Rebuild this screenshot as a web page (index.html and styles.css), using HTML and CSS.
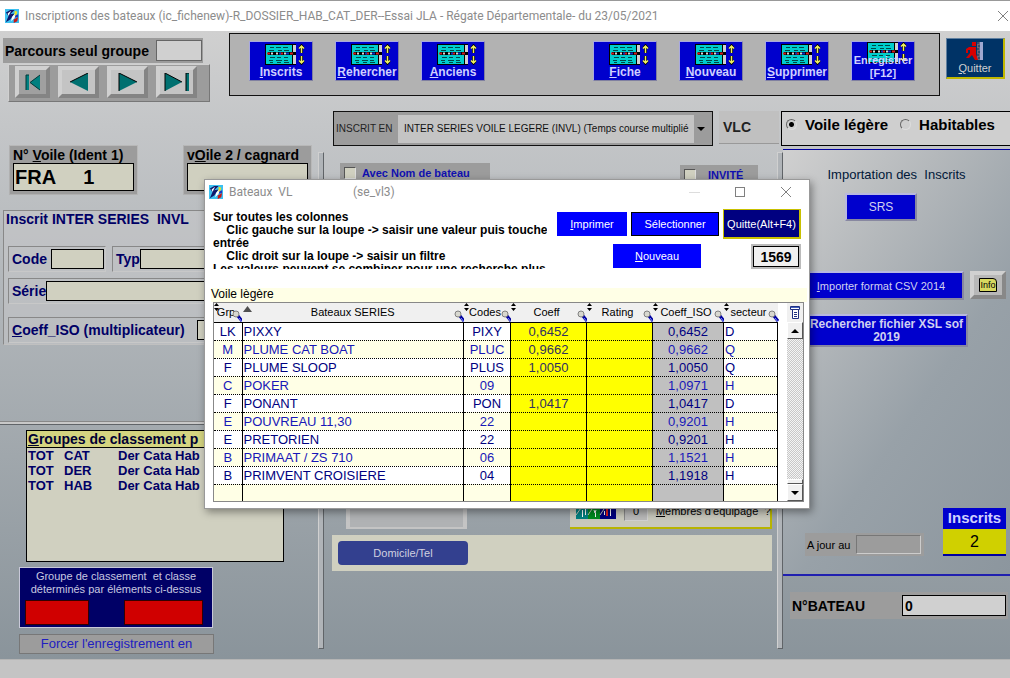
FILE: index.html
```html
<!DOCTYPE html>
<html lang="fr">
<head>
  <meta charset="UTF-8">
  <meta name="viewport" content="width=device-width, initial-scale=1.0">
  <title>Inscriptions des bateaux</title>
  <link rel="stylesheet" href="styles.css">
</head>
<body>
  <!-- icônes partagées -->
  <svg class="defs" width="0" height="0" aria-hidden="true">
    <symbol id="logo" viewBox="0 0 16 16">
      <rect width="16" height="16" fill="#3cc0f0"/>
      <path d="M1 4l5-3h5L6 6l5-1L6 12l-5 3 3-7z" fill="#10186c"/>
      <path d="M3 5l4-3-3 6zM8 9l5-6-1 6-5 5z" fill="#fff"/>
      <path d="M11 2l3 1-1 4-2 1z" fill="#f0e020"/>
      <path d="M12 7l3-1v3l-4 1z" fill="#2038c0"/>
      <path d="M10 12l5-3-1 5-4 2z" fill="#c81818"/>
    </symbol>
    <symbol id="sheet" viewBox="0 0 40 21">
      <rect x="0" y="0" width="31" height="21" fill="#000"/>
      <rect x="1" y="1" width="26" height="19" fill="#00cdcd"/>
      <rect x="28" y="1" width="3" height="19" fill="#d0d0d0"/>
      <path d="M5 3.500h4m2 0h5m2 0h5M4 6.500h5m4 0h4m2 0h5M5 13.500h5m2 0h4m3 0h4M4 16.500h4m3 0h6m2 0h4M5 18.500h3m4 0h4m3 0h5" stroke="#004848"/>
      <path d="M3 9.500h28" stroke="#000" stroke-width="3"/>
      <path d="M2 9.500h3m10 0h3m7 0h3" stroke="#d02020" stroke-width="2"/>
      <path d="M6 9.500h2m3 0h2m6 0h2" stroke="#d8d8d8" stroke-width="2"/>
      <path d="M14 9.500h2m5 0h3" stroke="#1030c0" stroke-width="2"/>
      <path d="M36.500 1v8M34.500 4.500l2-2.500 2 2.500M36.500 12v8M34.500 16.500l2 2.500 2-2.500" fill="none" stroke="#000" stroke-width="3"/>
      <path d="M36.500 2v7M34 4.500l2.500-2.500 2.500 2.500M36.500 12v7M34 16.500l2.500 2.500 2.500-2.500" fill="none" stroke="#f0f060" stroke-width="1.500"/>
    </symbol>
    <symbol id="lens" viewBox="0 0 11 12">
      <path d="M6 6l4 5" stroke="#0000a0" stroke-width="3"/>
      <path d="M7 8l3 4" stroke="#8090ff"/>
      <circle cx="4" cy="4" r="3" fill="#d8d8d0" stroke="#808080"/>
    </symbol>
    <symbol id="sort" viewBox="0 0 5 8">
      <path d="M0 3l2.500-3L5 3zM0 5h5L2.500 8z" fill="#000"/>
    </symbol>
  </svg>

  <header class="titlebar">
    <svg class="logo"><use href="#logo"/></svg>
    <h1>Inscriptions des bateaux (ic_fichenew)-R_DOSSIER_HAB_CAT_DER--Essai JLA - Régate Départementale- du 23/05/2021</h1>
    <button class="close" aria-label="Fermer"><svg width="10" height="10"><path d="M0 0l10 10M10 0L0 10" stroke="#808080"/></svg></button>
  </header>

  <main class="desk">
    <div class="head">
      <div class="browse">
        <div class="browse-label">
          <label for="parcours">Parcours seul groupe</label>
          <input id="parcours" type="text">
        </div>
        <div class="browse-nav">
          <button class="first" aria-label="Premier"><svg width="18" height="17"><path d="M2 1h3v15H2zM16 1v15L6 8.500z" fill="#008080"/><path d="M2 16V1h3M16 16L6 8.500 16 1" fill="none" stroke="#003838"/></svg></button>
          <button aria-label="Précédent"><svg width="20" height="18"><path d="M19 0v18L1 9z" fill="#007070"/><path d="M1 9L19 0" stroke="#000"/></svg></button>
          <button aria-label="Suivant"><svg width="20" height="18"><path d="M1 0v18l18-9z" fill="#007070"/><path d="M1 18V0l18 9" fill="none" stroke="#000"/></svg></button>
          <button aria-label="Dernier"><svg width="26" height="18"><path d="M1 0v18l17-9zM22 0h3v18h-3z" fill="#007070"/><path d="M1 18V0l17 9M22 18V0h3" fill="none" stroke="#000"/></svg></button>
        </div>
      </div>
      <nav class="toolbar">
        <button><svg class="sheet"><use href="#sheet"/></svg><span><u>I</u>nscrits</span></button>
        <button><svg class="sheet"><use href="#sheet"/></svg><span><u>R</u>ehercher</span></button>
        <button><svg class="sheet"><use href="#sheet"/></svg><span><u>A</u>nciens</span></button>
        <span class="slot"></span>
        <button><svg class="sheet"><use href="#sheet"/></svg><span><u>F</u>iche</span></button>
        <button><svg class="sheet"><use href="#sheet"/></svg><span><u>N</u>ouveau</span></button>
        <button><svg class="sheet"><use href="#sheet"/></svg><span><u>S</u>upprimer</span></button>
        <button class="save"><svg class="sheet"><use href="#sheet"/></svg><span>Enregistrer<br>[F12]</span></button>
      </nav>
      <button class="quit">
        <svg width="18" height="18">
          <path d="M11 0h3v18h-3z" fill="#686878"/><path d="M14 0h3v18h-3z" fill="#a0a8d0"/>
          <path d="M11 1h2m-1 3h2m-3 3h2m-1 3h2m-3 3h2m-1 3h2" stroke="#003060"/>
          <path d="M6 0h4v4H6zM3 5h7v7l2 6h-3l-3-5-3 3H0l4-5V8H2v3H0V7z" fill="#d80000"/>
        </svg>
        <span><u>Q</u>uitter</span>
      </button>
    </div>

    <div class="columns">
      <section class="left">
        <div class="idents">
          <div class="ident">
            <label for="voile1">N° <u>V</u>oile (Ident 1)</label>
            <input id="voile1" type="text" value="FRA     1">
          </div>
          <div class="ident">
            <label for="voile2">v<u>O</u>ile 2 / cagnard</label>
            <input id="voile2" type="text">
          </div>
        </div>

        <div class="serie">
          <h2>Inscrit INTER SERIES&nbsp; INVL</h2>
          <div class="serie-row">
            <div class="cell"><label for="code">Code</label><input id="code" class="w-code" type="text"></div>
            <div class="cell grow"><label for="typ">Typ</label><input id="typ" type="text"></div>
          </div>
          <div class="cell"><label for="serie">Série</label><input id="serie" type="text"></div>
          <div class="cell coeff"><label for="iso"><u>C</u>oeff_ISO (multiplicateur)</label><input id="iso" type="text"></div>
        </div>

        <div class="groupes">
          <div class="liste">
            <h3><u>G</u>roupes de classement p</h3>
            <table>
              <tr><td>TOT</td><td>CAT</td><td>Der Cata Hab</td></tr>
              <tr><td>TOT</td><td>DER</td><td>Der Cata Hab</td></tr>
              <tr><td>TOT</td><td>HAB</td><td>Der Cata Hab</td></tr>
            </table>
          </div>
          <div class="classe">
            <p>Groupe de classement&nbsp; et classe<br>déterminés par éléments ci-dessus</p>
            <div class="rouges"><span></span><span></span></div>
          </div>
          <button class="forcer">Forcer l'enregistrement en</button>
        </div>
      </section>

      <section class="middle">
        <div class="inscrit">
          <div class="inscrit-box">
            <label for="inscrit">INSCRIT EN</label>
            <select id="inscrit"><option>INTER SERIES VOILE LEGERE (INVL) (Temps course multiplié</option></select>
          </div>
          <div class="vlc">VLC</div>
        </div>
        <div class="options">
          <label class="tick"><input type="checkbox">Avec Nom de bateau</label>
          <label class="tick invite"><input type="checkbox">INVITÉ</label>
        </div>
        <div class="bottom">
          <div class="cadre"></div>
          <div class="equipage">
            <svg width="40" height="16">
              <path d="M0 16V6l5-5h5l4 5v10z" fill="#008080"/><path d="M12 16V6l4-5h6l4 5v10z" fill="#008a20"/><path d="M24 16V6l5-5h5l6 5v10z" fill="#000080"/>
              <path d="M5 0h5v3H5zM17 0h5v4h-5zM30 0h5v3h-5z" fill="#d8d060"/>
              <path d="M0 12l5-7M12 12l4-6M24 12l4-6" stroke="#c8c8bc"/>
              <path d="M6.500 7v7M9.500 5v7M18 7l1 3 1-3M19.500 10v4" fill="none" stroke="#fff"/><path d="M31 6v7" stroke="#e02020" stroke-width="2"/><path d="M28.500 8v4M34.500 5v8" stroke="#fff"/>
            </svg>
            <input type="text" value="0" aria-label="Nombre d'équipiers">
            <button><u>M</u>embres d'équipage&nbsp; ?</button>
          </div>
        </div>
        <div class="domicile"><button>Domicile/Tel</button></div>
      </section>

      <section class="right">
        <div class="type">
          <label><input type="radio" name="type" checked>Voile légère</label>
          <label><input type="radio" name="type">Habitables</label>
        </div>
        <div class="import">
          <h2>Importation des&nbsp; Inscrits</h2>
          <button class="blue srs">SRS</button>
          <div class="csv">
            <button class="blue"><u>I</u>mporter format CSV 2014</button>
            <button class="info"><span>Info</span></button>
          </div>
          <button class="blue xsl">Rechercher fichier XSL sof 2019</button>
          <div class="totals">
            <div class="ajour"><label for="ajour">A jour au</label><input id="ajour" type="text"></div>
            <div class="count"><b>Inscrits</b><span>2</span></div>
          </div>
        </div>
        <div class="bateau"><label for="bateau">N°BATEAU</label><input id="bateau" type="text" value="0"></div>
      </section>
    </div>

    <!-- fenêtre de recherche -->
    <div class="dialog" role="dialog" aria-labelledby="dlg-title">
      <div class="dialog-bar">
        <svg class="logo"><use href="#logo"/></svg>
        <h2 id="dlg-title"><span>Bateaux&nbsp; VL</span><span>(se_vl3)</span></h2>
        <button aria-label="Réduire"><svg width="11" height="11"><path d="M0 5.500h11" stroke="#ddd"/></svg></button>
        <button aria-label="Agrandir"><svg width="11" height="11"><rect x=".5" y=".5" width="9" height="9" fill="none" stroke="#808080"/></svg></button>
        <button aria-label="Fermer"><svg width="11" height="11"><path d="M0 0l10 10M10 0L0 10" stroke="#808080"/></svg></button>
      </div>
      <div class="dialog-top">
        <p class="aide">Sur toutes les colonnes<br>&nbsp;&nbsp;&nbsp; Clic gauche sur la loupe -&gt; saisir une valeur puis touche<br>entrée<br>&nbsp;&nbsp;&nbsp; Clic droit sur la loupe -&gt; saisir un filtre<br>Les valeurs peuvent se combiner pour une recherche plus</p>
        <div class="actions">
          <div class="actions-row">
            <button class="print"><u>I</u>mprimer</button>
            <button class="select">Sélectionner</button>
            <button class="leave">Quitte(Alt+F4)</button>
          </div>
          <div class="actions-row">
            <button class="new"><u>N</u>ouveau</button>
            <output>1569</output>
          </div>
        </div>
      </div>
      <h3 class="caption">Voile lègère</h3>
      <div class="grid">
        <table class="boats">
          <colgroup><col class="c-grp"><col><col class="c-code"><col class="c-coeff"><col class="c-rating"><col class="c-iso"><col class="c-sect"></colgroup>
          <thead>
            <tr>
              <th><svg class="sort"><use href="#sort"/></svg>Grp<svg class="lens"><use href="#lens"/></svg></th>
              <th><svg class="up" viewBox="0 0 9 6"><path d="M0 6l4.500-6L9 6z" fill="#505050"/></svg>Bateaux SERIES<svg class="lens"><use href="#lens"/></svg></th>
              <th><svg class="sort"><use href="#sort"/></svg>Codes<svg class="lens"><use href="#lens"/></svg></th>
              <th><svg class="sort"><use href="#sort"/></svg>Coeff<svg class="lens"><use href="#lens"/></svg></th>
              <th><svg class="sort"><use href="#sort"/></svg>Rating<svg class="lens"><use href="#lens"/></svg></th>
              <th><svg class="sort"><use href="#sort"/></svg>Coeff_ISO<svg class="lens"><use href="#lens"/></svg></th>
              <th><svg class="sort"><use href="#sort"/></svg>secteur<svg class="lens"><use href="#lens"/></svg></th>
            </tr>
          </thead>
          <tbody>
            <tr><td>LK</td><td>PIXXY</td><td>PIXY</td><td>0,6452</td><td></td><td>0,6452</td><td>D</td></tr>
            <tr><td>M</td><td>PLUME CAT BOAT</td><td>PLUC</td><td>0,9662</td><td></td><td>0,9662</td><td>Q</td></tr>
            <tr><td>F</td><td>PLUME SLOOP</td><td>PLUS</td><td>1,0050</td><td></td><td>1,0050</td><td>Q</td></tr>
            <tr><td>C</td><td>POKER</td><td>09</td><td></td><td></td><td>1,0971</td><td>H</td></tr>
            <tr><td>F</td><td>PONANT</td><td>PON</td><td>1,0417</td><td></td><td>1,0417</td><td>D</td></tr>
            <tr><td>E</td><td>POUVREAU 11,30</td><td>22</td><td></td><td></td><td>0,9201</td><td>H</td></tr>
            <tr><td>E</td><td>PRETORIEN</td><td>22</td><td></td><td></td><td>0,9201</td><td>H</td></tr>
            <tr><td>B</td><td>PRIMAAT / ZS 710</td><td>06</td><td></td><td></td><td>1,1521</td><td>H</td></tr>
            <tr><td>B</td><td>PRIMVENT CROISIERE</td><td>04</td><td></td><td></td><td>1,1918</td><td>H</td></tr>
            <tr><td></td><td></td><td></td><td></td><td></td><td></td><td></td></tr>
          </tbody>
        </table>
        <div class="scroll">
          <button class="menu" aria-label="Menu"><svg width="10" height="13"><path d="M.5.500h9v3h-9zM2.500 3.500h6v9h-6z" fill="#fff" stroke="#203080"/><path d="M1 1.500h8" stroke="#4060c0"/><path d="M4 6.500h3M4 8.500h3M4 10.500h3" stroke="#203080"/></svg></button>
          <button aria-label="Haut"><svg width="8" height="4"><path d="M4 0l4 4H0z"/></svg></button>
          <div class="track"><span></span></div>
          <button aria-label="Bas"><svg width="8" height="4"><path d="M0 0h8L4 4z"/></svg></button>
        </div>
      </div>
    </div>
  </main>
  <footer class="status"></footer>
</body>
</html>
```
FILE: styles.css
```css
* {
  margin: 0;
  padding: 0;
  box-sizing: border-box;
}
body {
  display: flex;
  flex-direction: column;
  min-height: 100vh;
  font-family: "Liberation Sans", Arial, sans-serif;
  font-size: 13px;
  background: #c4c4c4;
}
h1, h2, h3 {
  font-size: inherit;
  font-weight: inherit;
}
button, input, select {
  font: inherit;
  color: inherit;
  border: 0;
  border-radius: 0;
  background: none;
  min-width: 0;
}
svg {
  display: block;
}
.defs {
  position: absolute;
}
.logo {
  width: 14px;
  height: 14px;
}
/* barre de titre */
.titlebar {
  display: flex;
  align-items: center;
  gap: 6px;
  height: 31px;
  padding: 0 2px 0 5px;
  border-top: 1px solid #999;
  background: #fff;
  color: #8c8c8c;
  font-family: Roboto, sans-serif;
  font-size: 12px;
  white-space: nowrap;
}
.close {
  margin-left: auto;
}
/* fond */
.desk {
  position: relative;
  flex: 1;
  display: flex;
  flex-direction: column;
  background: linear-gradient(#d0d0d0, #c4c6c8 15%, #8a949b);
}
.status {
  height: 19px;
  border-top: 1px solid #b4b4b4;
  background: #c4c4c4;
}
/* entête */
.head {
  display: flex;
  align-items: flex-start;
  height: 72px;
  padding: 2px 5px 0 3px;
}
.browse {
  width: 226px;
  padding-top: 5px;
}
.browse-label {
  display: flex;
  align-items: center;
  width: 200px;
  height: 25px;
  background: #9c9c9c;
  font-size: 14px;
  font-weight: bold;
}
.browse-label label {
  width: 153px;
  padding-left: 2px;
  white-space: nowrap;
}
.browse-label input {
  width: 46px;
  height: 21px;
  border: 1px solid #666;
  background: #d0d0d0;
}
.browse-nav {
  display: flex;
  gap: 8px;
  width: 202px;
  height: 38px;
  margin: 1px 0 0 5px;
  padding: 1px 6px;
  border: 1px solid;
  border-color: #d0d0d0 #777 #777 #d0d0d0;
  background: #9c9c9c;
}
.browse-nav button {
  display: flex;
  align-items: center;
  justify-content: center;
  width: 41px;
  height: 32px;
  border: 4px solid;
  border-color: #d0d0d0 #848484 #848484 #d0d0d0;
  background: #c4c4c4;
}
.browse-nav .first {
  width: 35px;
  background: #a0a0a0;
}
.toolbar {
  flex: 1;
  display: flex;
  gap: 22px;
  height: 63px;
  padding: 7px 19px;
  border: 1px solid #111;
  background: #b2b2b2;
}
.toolbar button, .slot {
  width: 64px;
  height: 40px;
}
.toolbar button {
  display: flex;
  flex-direction: column;
  align-items: center;
  padding-top: 2px;
  border: 1px solid;
  border-color: #a8a8e0 #8080a0 #8080a0 #a8a8e0;
  background: #0000cd;
  color: #d0d0ff;
  font-size: 12px;
  font-weight: bold;
  line-height: 15px;
  overflow: hidden;
}
.sheet {
  flex: none;
  width: 40px;
  height: 21px;
  margin-left: 8px;
}
.toolbar span {
  white-space: nowrap;
}
.toolbar .save {
  justify-content: flex-end;
  font-size: 11px;
  line-height: 13px;
}
.save .sheet {
  margin-bottom: -9px;
}
.quit {
  display: flex;
  flex-direction: column;
  align-items: center;
  width: 59px;
  height: 41px;
  margin: 5px 0 0 6px;
  padding-top: 3px;
  border: 1px solid;
  border-width: 1px 2px 2px 1px;
  border-color: #6080a0 #c0b800 #c0b800 #6080a0;
  background: #003366;
  color: #d0d0d0;
  font-size: 11px;
  line-height: 16px;
}
/* trois colonnes */
.columns {
  flex: 1;
  display: grid;
  grid-template-columns: 324px minmax(0, 1fr) 227px;
}
.left {
  position: relative;
  padding-top: 42px;
}
.left::after, .middle::after {
  content: "";
  position: absolute;
  top: 49px;
  right: 0;
  bottom: 10px;
  width: 4px;
  border: 1px solid;
  border-color: #d0d0d0 #606468 #606468 #d0d0d0;
  background: #b0b4b8;
}
.idents {
  display: flex;
  gap: 45px;
  padding-left: 9px;
}
.ident {
  width: 129px;
  height: 50px;
  padding: 2px 3px 3px;
  border: 1px solid;
  border-color: #b8b8b8 #b8b8b8 #b0b0b0 #b0b0b0;
  background: #9c9c9c;
  font-size: 14px;
  font-weight: bold;
  white-space: nowrap;
}
.ident label {
  display: block;
  height: 15px;
  line-height: 15px;
}
.ident input {
  width: 100%;
  height: 28px;
  padding-left: 1px;
  border: 1px solid #000;
  background: #d0d0c0;
  font-size: 20px;
  white-space: pre;
}
.serie {
  display: flex;
  flex-direction: column;
  height: 135px;
  margin: 15px 8px 0 3px;
  padding: 0 2px 0 4px;
  border: 1px solid;
  border-color: #888 #c8c8c8 #c0c0c0 #888;
  background: rgba(200, 200, 202, .5);
  color: #000066;
  font-size: 14px;
  font-weight: bold;
}
.serie h2 {
  height: 35px;
  margin-left: -2px;
}
.serie-row {
  display: flex;
  gap: 6px;
  margin-bottom: 6px;
}
.cell {
  display: flex;
  align-items: center;
  height: 26px;
  padding: 0 1px 0 3px;
  border: 1px solid;
  border-color: #888 #c8c8c8 #c8c8c8 #888;
}
.cell label {
  flex: none;
}
.cell input {
  flex: 1;
  height: 20px;
  border: 1px solid #000;
  background: #d0d0c0;
}
.cell.grow {
  flex: 1;
}
.cell .w-code {
  flex: none;
  width: 53px;
  margin-left: 4px;
}
.coeff {
  margin-top: 13px;
}
.coeff input {
  margin-left: 12px;
}
.groupes {
  margin: 77px 4px 0 0;
  border-top: 2px solid #c8c8c8;
  box-shadow: 0 -1px #888, inset 0 1px #606468;
  padding: 6px 0 0 19px;
}
.liste {
  width: 258px;
  height: 132px;
  margin-left: 7px;
  border: 1px solid #000;
  background: #d0d0c0;
  color: #000066;
  font-size: 13px;
  font-weight: bold;
}
.liste h3 {
  height: 17px;
  padding-left: 1px;
  border-bottom: 1px solid #000;
  background: #d4d480;
  color: #000033;
  font-size: 14px;
  line-height: 16px;
  white-space: nowrap;
}
.liste table {
  border-spacing: 0;
}
.liste td {
  padding-left: 1px;
  line-height: 15px;
}
.liste td:nth-child(1) {
  width: 36px;
}
.liste td:nth-child(2) {
  width: 54px;
}
.classe {
  width: 194px;
  height: 61px;
  margin-top: 5px;
  padding: 2px 5px;
  border: 1px solid #c8c8d8;
  background: #000066;
  color: #c8c8e0;
  font-size: 11px;
  line-height: 13px;
  text-align: center;
  white-space: nowrap;
}
.rouges {
  display: flex;
  justify-content: space-between;
  margin: 4px 4px 0 0;
}
.rouges span {
  width: 64px;
  height: 25px;
  border: 1px solid #300;
  background: #d00000;
}
.rouges span + span {
  width: 79px;
}
.forcer {
  display: block;
  width: 195px;
  height: 20px;
  margin-top: 6px;
  border: 1px solid #777;
  background: #9c9c9c;
  color: #2020c0;
  line-height: 16px;
}
/* colonne centrale */
.middle {
  position: relative;
  display: flex;
  flex-direction: column;
  padding-top: 8px;
}
.inscrit {
  display: flex;
  justify-content: space-between;
  gap: 6px;
  padding: 0 4px 0 9px;
}
.inscrit-box {
  flex: 1;
  display: flex;
  align-items: center;
  min-width: 0;
  height: 35px;
  padding-left: 2px;
  border: 1px solid #111;
  background: #9c9c9c;
  font-size: 10px;
}
.inscrit-box label {
  flex: none;
  width: 62px;
  color: #222;
  white-space: nowrap;
}
.inscrit-box select {
  flex: 1;
  height: 28px;
  padding: 0 14px 0 6px;
  appearance: none;
  background: url("data:image/svg+xml,%3Csvg xmlns='http://www.w3.org/2000/svg' width='8' height='4'%3E%3Cpath d='M0 0h8L4 4z'/%3E%3C/svg%3E") no-repeat right 7px center, linear-gradient(90deg, #c4c4c4 calc(100% - 18px), #9c9c9c calc(100% - 18px));
  color: #111;
}
.vlc {
  width: 60px;
  height: 33px;
  padding-left: 4px;
  border-bottom: 1px solid #999;
  background: #c0c0c0;
  color: #222;
  font-size: 14px;
  font-weight: bold;
  line-height: 33px;
}
.options {
  display: flex;
  justify-content: space-between;
  padding: 17px 25px 0 16px;
}
.tick {
  display: flex;
  align-items: center;
  gap: 6px;
  width: 150px;
  height: 19px;
  padding-left: 4px;
  background: #9c9c9c;
  color: #1010b0;
  font-size: 11px;
  font-weight: bold;
}
.tick input {
  appearance: none;
  width: 12px;
  height: 12px;
  border: 1px solid;
  border-color: #555 #ddd #ddd #555;
  background: #d0d0c0;
}
.tick.invite {
  width: 78px;
  gap: 12px;
  margin-top: 2px;
}
.bottom {
  display: flex;
  justify-content: space-between;
  align-items: flex-end;
  margin: auto 11px 6px 22px;
}
.cadre {
  width: 121px;
  height: 40px;
  border: 1px solid #c4c4c4;
  border-width: 0 4px 2px;
  background: #b0b2b4;
}
.equipage {
  display: flex;
  align-items: center;
  gap: 8px;
  width: 202px;
  height: 34px;
  padding-left: 6px;
  border: 2px solid #b8b400;
  border-width: 0 2px 2px 0;
  background: #c8c8bc;
  font-size: 11px;
  white-space: nowrap;
}
.equipage svg {
  flex: none;
}
.equipage input {
  width: 24px;
  height: 20px;
  border: 1px solid;
  border-color: #888 #d0d0d0 #d0d0d0 #888;
  background: #b8b8b8;
  text-align: center;
}
.domicile {
  height: 36px;
  margin: 0 11px 88px 8px;
  padding: 6px;
  background: #d0d0c0;
}
.domicile button {
  width: 130px;
  height: 24px;
  border-radius: 4px;
  background: #33408f;
  color: #d0d0e0;
  font-size: 11px;
}
/* colonne de droite */
.right {
  display: flex;
  flex-direction: column;
  padding-top: 8px;
}
.type {
  position: relative;
  display: flex;
  gap: 12px;
  height: 35px;
  margin-left: -2px;
  padding: 4px 4px;
  border: 1px solid #000;
  border-right: 0;
  background: #cfcfcf;
  font-size: 15px;
  font-weight: bold;
  white-space: nowrap;
}
.type label {
  display: flex;
  gap: 8px;
  height: 17px;
  align-items: center;
}
.type input {
  appearance: none;
  width: 11px;
  height: 11px;
  border: 1px solid;
  border-color: #666 #ddd #ddd #666;
  border-radius: 50%;
}
.type input:checked {
  background: radial-gradient(#000 2px, transparent 3px);
}
.import {
  flex: 1;
  display: flex;
  flex-direction: column;
  margin-top: 3px;
  padding-top: 17px;
  border-top: 1px solid #0000a0;
  border-bottom: 2px solid #2020b0;
  background: linear-gradient(125deg, #d0d0d0, #b4b8bb 30%, #98a1a8 60%, #8c969e);
}
.import h2 {
  align-self: center;
  height: 26px;
  color: #001838;
  white-space: nowrap;
}
.blue {
  border: 2px solid;
  border-color: #b8b8e0 #8888a0 #8888a0 #b8b8e0;
  background: #0000cd;
  color: #d0d0f0;
  font-size: 12px;
  white-space: nowrap;
}
.srs {
  width: 72px;
  height: 28px;
  margin-left: 62px;
}
.csv {
  display: flex;
  gap: 6px;
  margin: 50px 0 14px 0;
}
.csv .blue {
  width: 181px;
  height: 29px;
  padding-left: 15px;
  font-size: 11px;
}
.info {
  display: flex;
  align-items: center;
  justify-content: center;
  width: 36px;
  height: 28px;
  border: 4px solid;
  border-color: #d0d0d0 #888 #888 #d0d0d0;
  background: #b8b8b8;
}
.info span {
  border: 1px solid #000;
  border-top-right-radius: 4px;
  background: #d8d860;
  font-size: 9px;
  line-height: 12px;
}
.xsl {
  width: 185px;
  height: 33px;
  padding-left: 22px;
  font-weight: bold;
  line-height: 13px;
  white-space: normal;
}
.totals {
  display: flex;
  justify-content: space-between;
  align-items: flex-end;
  margin: auto 4px 18px 22px;
}
.ajour {
  display: flex;
  align-items: center;
  gap: 6px;
  width: 119px;
  height: 23px;
  padding-left: 2px;
  background: #9c9c9c;
  font-size: 11px;
  white-space: nowrap;
}
.ajour input {
  width: 65px;
  height: 19px;
  border: 1px solid;
  border-color: #777 #ccc #ccc #777;
}
.count {
  width: 63px;
  border-bottom: 2px solid #0000a0;
  background: #d0d000;
  text-align: center;
}
.count b {
  display: block;
  height: 21px;
  background: #0000cd;
  color: #d0d0ff;
  font-size: 15px;
  line-height: 20px;
}
.count span {
  display: block;
  height: 25px;
  font-size: 16px;
  line-height: 25px;
}
.bateau {
  display: flex;
  align-items: center;
  justify-content: space-between;
  height: 27px;
  margin: 16px 2px 40px 7px;
  padding: 0 2px;
  background: #9c9c9c;
  font-size: 14px;
  font-weight: bold;
}
.bateau input {
  width: 104px;
  height: 21px;
  padding-left: 2px;
  border: 1px solid #000;
  background: #d0d0d0;
}
/* fenêtre */
.dialog {
  position: absolute;
  top: 148px;
  left: 204px;
  width: 606px;
  border: 1px solid #999;
  background: #fff;
  box-shadow: 2px 3px 8px rgba(0, 0, 0, .4);
}
.dialog-bar {
  display: flex;
  align-items: center;
  height: 24px;
  padding: 0 17px 0 4px;
  color: #8c8c8c;
  font-family: Roboto, sans-serif;
  font-size: 12px;
}
.dialog-bar h2 {
  display: flex;
  flex: 1;
  padding-left: 6px;
}
.dialog-bar h2 span:first-child {
  width: 124px;
}
.dialog-bar button {
  margin-left: 35px;
}
.dialog-top {
  display: flex;
  justify-content: space-between;
  height: 84px;
  padding: 5px 8px 0 8px;
}
.aide {
  height: 60px;
  padding-top: 2px;
  overflow: hidden;
  font-size: 12px;
  font-weight: bold;
  line-height: 13px;
  white-space: nowrap;
}
.actions-row {
  display: flex;
  gap: 4px;
  align-items: center;
  margin-bottom: 5px;
  font-size: 11px;
}
.actions button {
  height: 24px;
  background: #0000ff;
  color: #fff;
}
.actions .print {
  width: 70px;
}
.actions .select {
  width: 88px;
  border: 1px solid #000;
}
.actions .leave {
  width: 78px;
  height: 30px;
  border: 2px solid #c8c000;
  border-width: 1px 2px 2px 1px;
  background: #000080;
}
.actions .new {
  width: 88px;
  margin-left: 56px;
}
.actions output {
  width: 46px;
  height: 21px;
  margin: 0 2px 0 auto;
  border: 1px solid #000;
  outline: 2px solid #bbb;
  background: #f0f0f0;
  font-size: 14px;
  font-weight: bold;
  line-height: 20px;
  text-align: center;
}
.caption {
  height: 14px;
  margin: 0 2px 0 6px;
  background: #ffffe6;
  font-size: 12px;
  line-height: 13px;
}
.grid {
  display: flex;
  justify-content: space-between;
  margin: 0 5px 6px 8px;
  border: 1px solid #888;
}
.boats {
  table-layout: fixed;
  width: 564px;
  border-collapse: collapse;
  font-size: 13px;
}
.c-grp { width: 28px; }
.c-code { width: 47px; }
.c-coeff { width: 76px; }
.c-rating { width: 66px; }
.c-iso { width: 71px; }
.c-sect { width: 54px; }
.boats th {
  position: relative;
  height: 19px;
  border-bottom: 1px solid #000;
  background: #f0f0f0;
  font-size: 11px;
  font-weight: normal;
}
.boats th:not(:nth-child(2)) {
  padding-right: 4px;
}
.sort, .lens, .up {
  position: absolute;
}
.sort {
  top: 0;
  left: 0;
  width: 5px;
  height: 8px;
}
.up {
  top: 3px;
  left: 1px;
  width: 9px;
  height: 6px;
}
.lens {
  right: -1px;
  bottom: 0;
  width: 11px;
  height: 12px;
}
.boats td {
  height: 18px;
  border-right: 1px solid #000;
  border-bottom: 1px dotted #000;
  color: #000080;
  line-height: 17px;
  text-align: center;
}
.boats tr:nth-child(even) td {
  background: #ffffe6;
  color: #1818b8;
}
.boats td:nth-child(2), .boats td:nth-child(7) {
  padding-left: 1px;
  text-align: left;
}
.boats tr td:nth-child(4), .boats tr td:nth-child(5),
.boats tr:nth-child(even) td:nth-child(4), .boats tr:nth-child(even) td:nth-child(5) {
  background: #ffff00;
  color: #303060;
}
.boats tr td:nth-child(6), .boats tr:nth-child(even) td:nth-child(6) {
  background: #c0c0c0;
}
.boats tr:last-child td {
  height: 17px;
  border-bottom: 0;
}
.scroll {
  display: flex;
  flex-direction: column;
  width: 16px;
}
.scroll button {
  display: flex;
  align-items: center;
  justify-content: center;
  height: 17px;
  border: 1px solid;
  border-color: #fff #555 #555 #fff;
  background: #f0f0f0;
}
.scroll .menu {
  height: 19px;
  border: 0;
}
.track {
  flex: 1;
  display: flex;
  align-items: flex-end;
  background: repeating-conic-gradient(#c8c8c8 0 25%, #f4f4f4 0 50%) 0 0 / 2px 2px;
}
.track span {
  flex: 1;
  height: 5px;
  border: 1px solid;
  border-color: #fff #555 #555 #fff;
  background: #f0f0f0;
}
```
